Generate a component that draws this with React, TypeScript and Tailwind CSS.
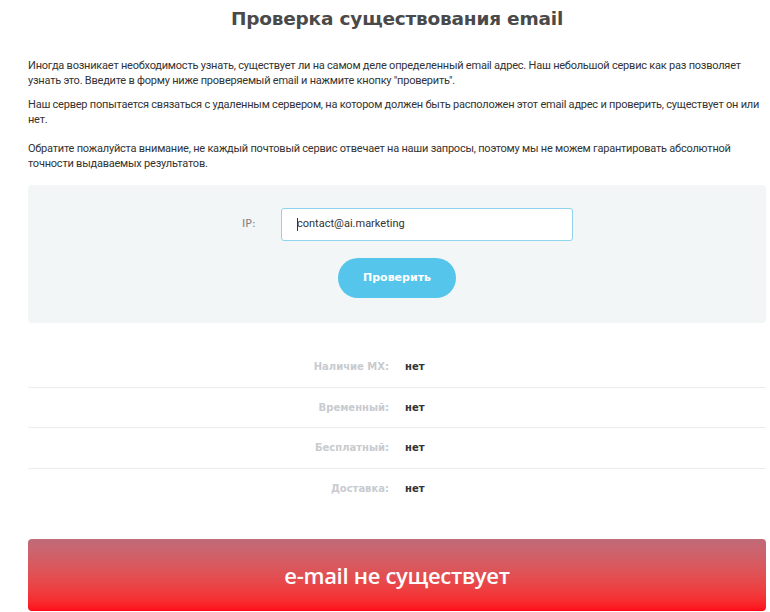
export default function App() {
  const rows = [
    { label: "Наличие MX:", value: "нет" },
    { label: "Временный:", value: "нет" },
    { label: "Бесплатный:", value: "нет" },
    { label: "Доставка:", value: "нет" },
  ];

  return (
    <div className="min-h-screen bg-white font-['Roboto',sans-serif] text-[#333]">
      <div className="ml-[28px] mr-[4px]">
        {/* Title */}
        <h1 className="h-[38px] pt-[5px] text-center font-['DejaVu_Sans',sans-serif] text-[18.5px] font-bold tracking-[-0.2px] text-[#4a4a4a]">
          Проверка существования email
        </h1>

        {/* Description */}
        <div className="mt-[20px] text-[11px] leading-[15px] tracking-[-0.22px] text-[#333]">
          <p>
            Иногда возникает необходимость узнать, существует ли на самом деле определенный email адрес. Наш небольшой сервис как раз позволяет узнать это. Введите в форму ниже проверяемый email и нажмите кнопку "проверить".
          </p>
          <p className="mt-[9px]">
            Наш сервер попытается связаться с удаленным сервером, на котором должен быть расположен этот email адрес и проверить, существует он или нет.
          </p>
          <p className="mt-[14px]">
            Обратите пожалуйста внимание, не каждый почтовый сервис отвечает на наши запросы, поэтому мы не можем гарантировать абсолютной точности выдаваемых результатов.
          </p>
        </div>

        {/* Form panel */}
        <div className="mt-[14px] flex h-[138px] flex-col items-center rounded-[4px] bg-[#f3f6f7] pt-[23px]">
          <div className="ml-[21px] flex items-center">
            <span className="w-[39px] font-['DejaVu_Sans',sans-serif] text-[11px] text-[#808080]">IP:</span>
            <div className="flex h-[33px] w-[292px] items-center rounded-[3px] border border-[#8fd3ef] bg-white pl-[15px] text-[11px] text-[#333]">
              <span className="mr-[-1px] h-[13px] w-px bg-[#333]" />
              contact@ai.marketing
            </div>
          </div>
          <button className="mt-[17px] h-[40px] w-[118px] rounded-full bg-[#56c5ec] font-['DejaVu_Sans',sans-serif] text-[11px] font-bold text-white">
            Проверить
          </button>
        </div>

        {/* Results */}
        <div className="mt-[24px]">
          {rows.map((r, i) => (
            <div
              key={r.label}
              className={`flex h-[40.5px] items-center ${i < rows.length - 1 ? "border-b border-[#ececec]" : ""}`}
            >
              <span className="w-[361px] text-right font-['DejaVu_Sans',sans-serif] text-[10px] font-bold text-[#c8cbcf]">
                {r.label}
              </span>
              <span className="ml-[16px] font-['DejaVu_Sans',sans-serif] text-[10px] font-semibold text-[#333]">
                {r.value}
              </span>
            </div>
          ))}
        </div>

        {/* Result banner */}
        <div className="mt-[30px] flex h-[72px] items-center justify-center rounded-[4px] bg-gradient-to-b from-[#c06b79] to-[#ff0517]">
          <span className="font-['Open_Sans',sans-serif] text-[22px] font-semibold tracking-[-0.3px] text-white">
            e-mail не существует
          </span>
        </div>
      </div>
    </div>
  );
}
